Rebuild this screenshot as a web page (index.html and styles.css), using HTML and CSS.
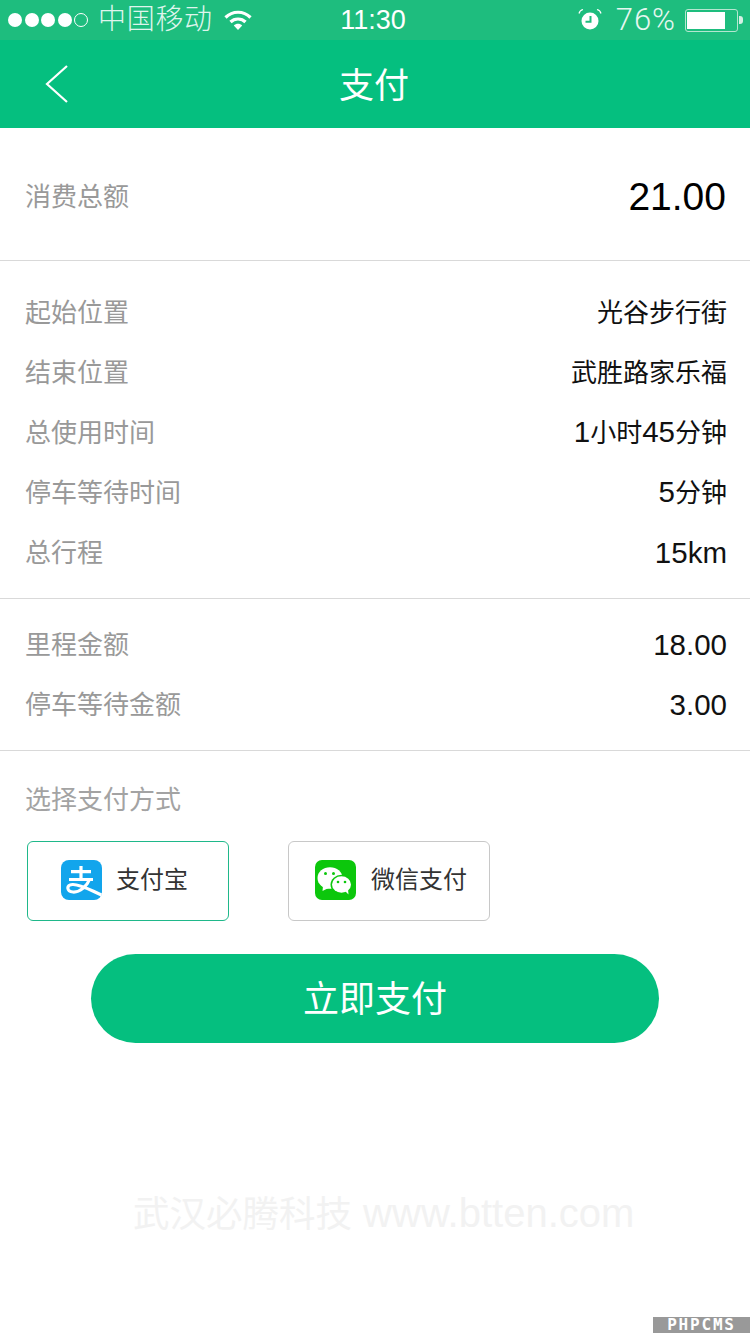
FILE: index.html
```html
<!DOCTYPE html>
<html lang="zh">
<head>
<meta charset="utf-8">
<title>支付</title>
<link rel="stylesheet" href="styles.css">
</head>
<body>
<div class="page">
  <div class="status">
    <div class="status-left">
      <span class="signal"><i class="dot"></i><i class="dot"></i><i class="dot"></i><i class="dot"></i><i class="dot empty"></i></span>
      <span class="carrier">中国移动</span>
      <svg class="wifi" width="30" height="22" viewBox="0 0 30 22"><path d="M2.5 8.5C9.5 1.5 20.5 1.500 27.500 8.500" fill="none" stroke="#fff" stroke-width="3.200"/><path d="M7.500 13C11.500 9 18.500 9 22.500 13" fill="none" stroke="#fff" stroke-width="3.200"/><path d="M10.800 16.500C13 14.300 17 14.300 19.200 16.500L15 21Z" fill="#fff"/></svg>
    </div>
    <div class="clock">11:30</div>
    <div class="status-right">
      <svg class="alarm" width="24" height="24" viewBox="0 0 24 24"><circle cx="12" cy="13" r="8.500" fill="#fff"/><path d="M12.500 8v5.800H7.500" fill="none" stroke="#1ebd7e" stroke-width="2"/><path d="M1 5.500C1.500 3.500 3 2 5 1.500M23 5.500C22.500 3.500 21 2 19 1.500" fill="none" stroke="#fff" stroke-width="1.200"/></svg>
      <span class="percent">76%</span>
      <span class="battery"><span class="battery-fill"></span></span>
      <span class="battery-tip"></span>
    </div>
  </div>
  <header class="nav">
    <svg class="back" width="26" height="40" viewBox="0 0 26 40"><path d="M23 2 3 20l20 18" fill="none" stroke="#fff" stroke-width="2.200"/></svg>
    <h1 class="title">支付</h1>
  </header>

  <section class="total">
    <span class="label">消费总额</span>
    <span class="total-value">21.00</span>
  </section>

  <section class="group group-trip">
    <div class="row"><span class="label">起始位置</span><span class="value">光谷步行街</span></div>
    <div class="row"><span class="label">结束位置</span><span class="value">武胜路家乐福</span></div>
    <div class="row"><span class="label">总使用时间</span><span class="value"><span class="num">1</span>小时<span class="num">45</span>分钟</span></div>
    <div class="row"><span class="label">停车等待时间</span><span class="value"><span class="num">5</span>分钟</span></div>
    <div class="row"><span class="label">总行程</span><span class="value value-latin">15km</span></div>
  </section>

  <section class="group group-fee">
    <div class="row"><span class="label">里程金额</span><span class="value value-latin">18.00</span></div>
    <div class="row"><span class="label">停车等待金额</span><span class="value value-latin">3.00</span></div>
  </section>

  <section class="pay">
    <div class="pay-title">选择支付方式</div>
    <div class="methods">
      <div class="method method-alipay">
        <svg class="method-icon" width="41" height="40" viewBox="0 0 41 40"><rect width="41" height="40" rx="8" fill="#12a5ec"/><path d="M10 11.700H30M20 6V19.300M8 19.500H32M28.500 19.500C26 26 19 32.500 12 32C5.500 31.500 5 25 11.500 24.500C19 24 29 30 40.500 35" fill="none" stroke="#fff" stroke-width="3.200"/></svg>
        <span class="method-name">支付宝</span>
      </div>
      <div class="method method-wechat">
        <svg class="method-icon" width="41" height="40" viewBox="0 0 41 40"><rect width="41" height="40" rx="7" fill="#0cc70c"/><ellipse cx="15" cy="18" rx="12.500" ry="10.800" fill="#fff"/><path d="M8 26l-.5 5 6-3z" fill="#fff"/><ellipse cx="26.500" cy="24.500" rx="11" ry="9.700" fill="#0cc70c"/><ellipse cx="26.500" cy="24.500" rx="9.500" ry="8.200" fill="#fff"/><path d="M30 31l3.500 3.500-.5-5.500z" fill="#fff"/><circle cx="10.500" cy="13.500" r="1.500" fill="#0cc70c"/><circle cx="18.500" cy="13.500" r="1.500" fill="#0cc70c"/><circle cx="23" cy="22" r="1.300" fill="#0cc70c"/><circle cx="30" cy="22" r="1.300" fill="#0cc70c"/></svg>
        <span class="method-name">微信支付</span>
      </div>
    </div>
    <button class="pay-btn" type="button">立即支付</button>
  </section>

  <div class="watermark"><span class="wm-cn">武汉必腾科技</span> www.btten.com</div>
  <div class="footer"><span class="badge">PHPCMS</span></div>
</div>
</body>
</html>
```

FILE: styles.css
```css
* { box-sizing: border-box; }
html, body { margin: 0; padding: 0; }
body {
  background: #fff;
  font-family: "Liberation Sans", "Noto Sans CJK SC", sans-serif;
}
.page {
  width: 750px;
  height: 1334px;
  display: flex;
  flex-direction: column;
  overflow: hidden;
  background: #fff;
}
.status {
  height: 40px;
  flex: none;
  display: grid;
  grid-template-columns: 1fr auto 1fr;
  align-items: center;
  padding: 0 7px 0 8px;
  background: #1ebd7e;
  color: #fff;
}
.status-left, .status-right { display: flex; align-items: center; }
.status-right { justify-content: flex-end; }
.signal { display: flex; gap: 2.500px; }
.dot { width: 14px; height: 14px; border-radius: 50%; background: #fff; }
.dot.empty { background: none; border: 1px solid #fff; }
.carrier { margin-left: 10px; font-size: 28px; letter-spacing: 0.700px; line-height: 40px; font-weight: 300; color: #dff5ec; }
.wifi { margin-left: 10px; }
.clock { font-size: 27px; line-height: 40px; margin-right: 5px; }
.alarm { margin-right: 14px; }
.percent { font-family: Roboto, "Liberation Sans", sans-serif; font-weight: 300; font-size: 31px; line-height: 40px; color: #e6f7f0; letter-spacing: 1px; margin-right: 9px; }
.battery {
  width: 53px; height: 23px;
  padding: 2px 1px;
  border: 1px solid #b5e6d0;
  border-radius: 3px;
  display: flex;
}
.battery-fill { width: 38px; background: #fff; }
.battery-tip { width: 4px; height: 8px; margin-left: 1px; background: #d5f0e4; border-radius: 0 3px 3px 0; }
.nav {
  height: 88px;
  flex: none;
  position: relative;
  display: flex;
  align-items: center;
  justify-content: center;
  padding: 0 2px 4px 0;
  background: #05bf7f;
}
.back { position: absolute; left: 44px; top: 24px; }
.title { margin: 0; font-size: 35px; font-weight: 400; color: #fff; }
.total {
  height: 133px;
  flex: none;
  display: flex;
  justify-content: space-between;
  align-items: center;
  padding: 0 24px 0 25px;
  border-bottom: 1px solid #d9d9d9;
}
.label { font-size: 26px; color: #999; padding-bottom: 4px; }
.total .label { padding-bottom: 0; }
.total-value { font-size: 39px; color: #000; padding-top: 6px; }
.group { flex: none; padding: 21px 23px 16px 25px; border-bottom: 1px solid #d9d9d9; }
.group-fee { padding: 15px 23px 16px 25px; }
.row { height: 60px; display: flex; justify-content: space-between; align-items: center; }
.value { font-size: 26px; color: #111; padding-bottom: 4px; }
.num { font-size: 29.500px; }
.value-latin { font-size: 29.500px; padding-bottom: 0; padding-top: 1px; }
.pay { flex: none; padding: 29px 0 0; }
.pay-title { padding-left: 25px; font-size: 26px; line-height: 40px; color: #a3a3a3; }
.methods { display: flex; gap: 59px; padding: 21px 0 0 27px; }
.method {
  width: 202px; height: 80px;
  display: flex; align-items: center; gap: 14px;
  padding-bottom: 2px;
  border: 1px solid #c8c8c8;
  border-radius: 6px;
}
.method-alipay { padding-left: 33px; border-color: #1fb88a; }
.method-wechat { padding-left: 26px; }
.method-name { font-size: 24px; color: #333; padding-bottom: 6px; }
.method-wechat .method-name { margin-left: 1px; }
.pay-btn {
  display: block;
  width: 568px; height: 89px;
  margin: 33px 0 0 91px;
  padding: 0 0 6px;
  border: 0;
  border-radius: 45px;
  background: #05bf7f;
  color: #fff;
  font: inherit;
  font-size: 36px;
}
.watermark {
  margin-top: 147px;
  padding-left: 133px;
  font-size: 40px;
  line-height: 46px;
  color: #f2f2f2;
  white-space: nowrap;
}
.wm-cn { font-size: 36.500px; }
.footer { margin-top: auto; margin-bottom: 1px; display: flex; justify-content: flex-end; }
.badge {
  width: 97px; height: 16px;
  background: #999;
  color: #fff;
  font-family: "DejaVu Sans Mono", monospace;
  font-weight: 700;
  font-size: 16px;
  line-height: 16px;
  letter-spacing: 1.800px;
  text-align: center;
}
```
